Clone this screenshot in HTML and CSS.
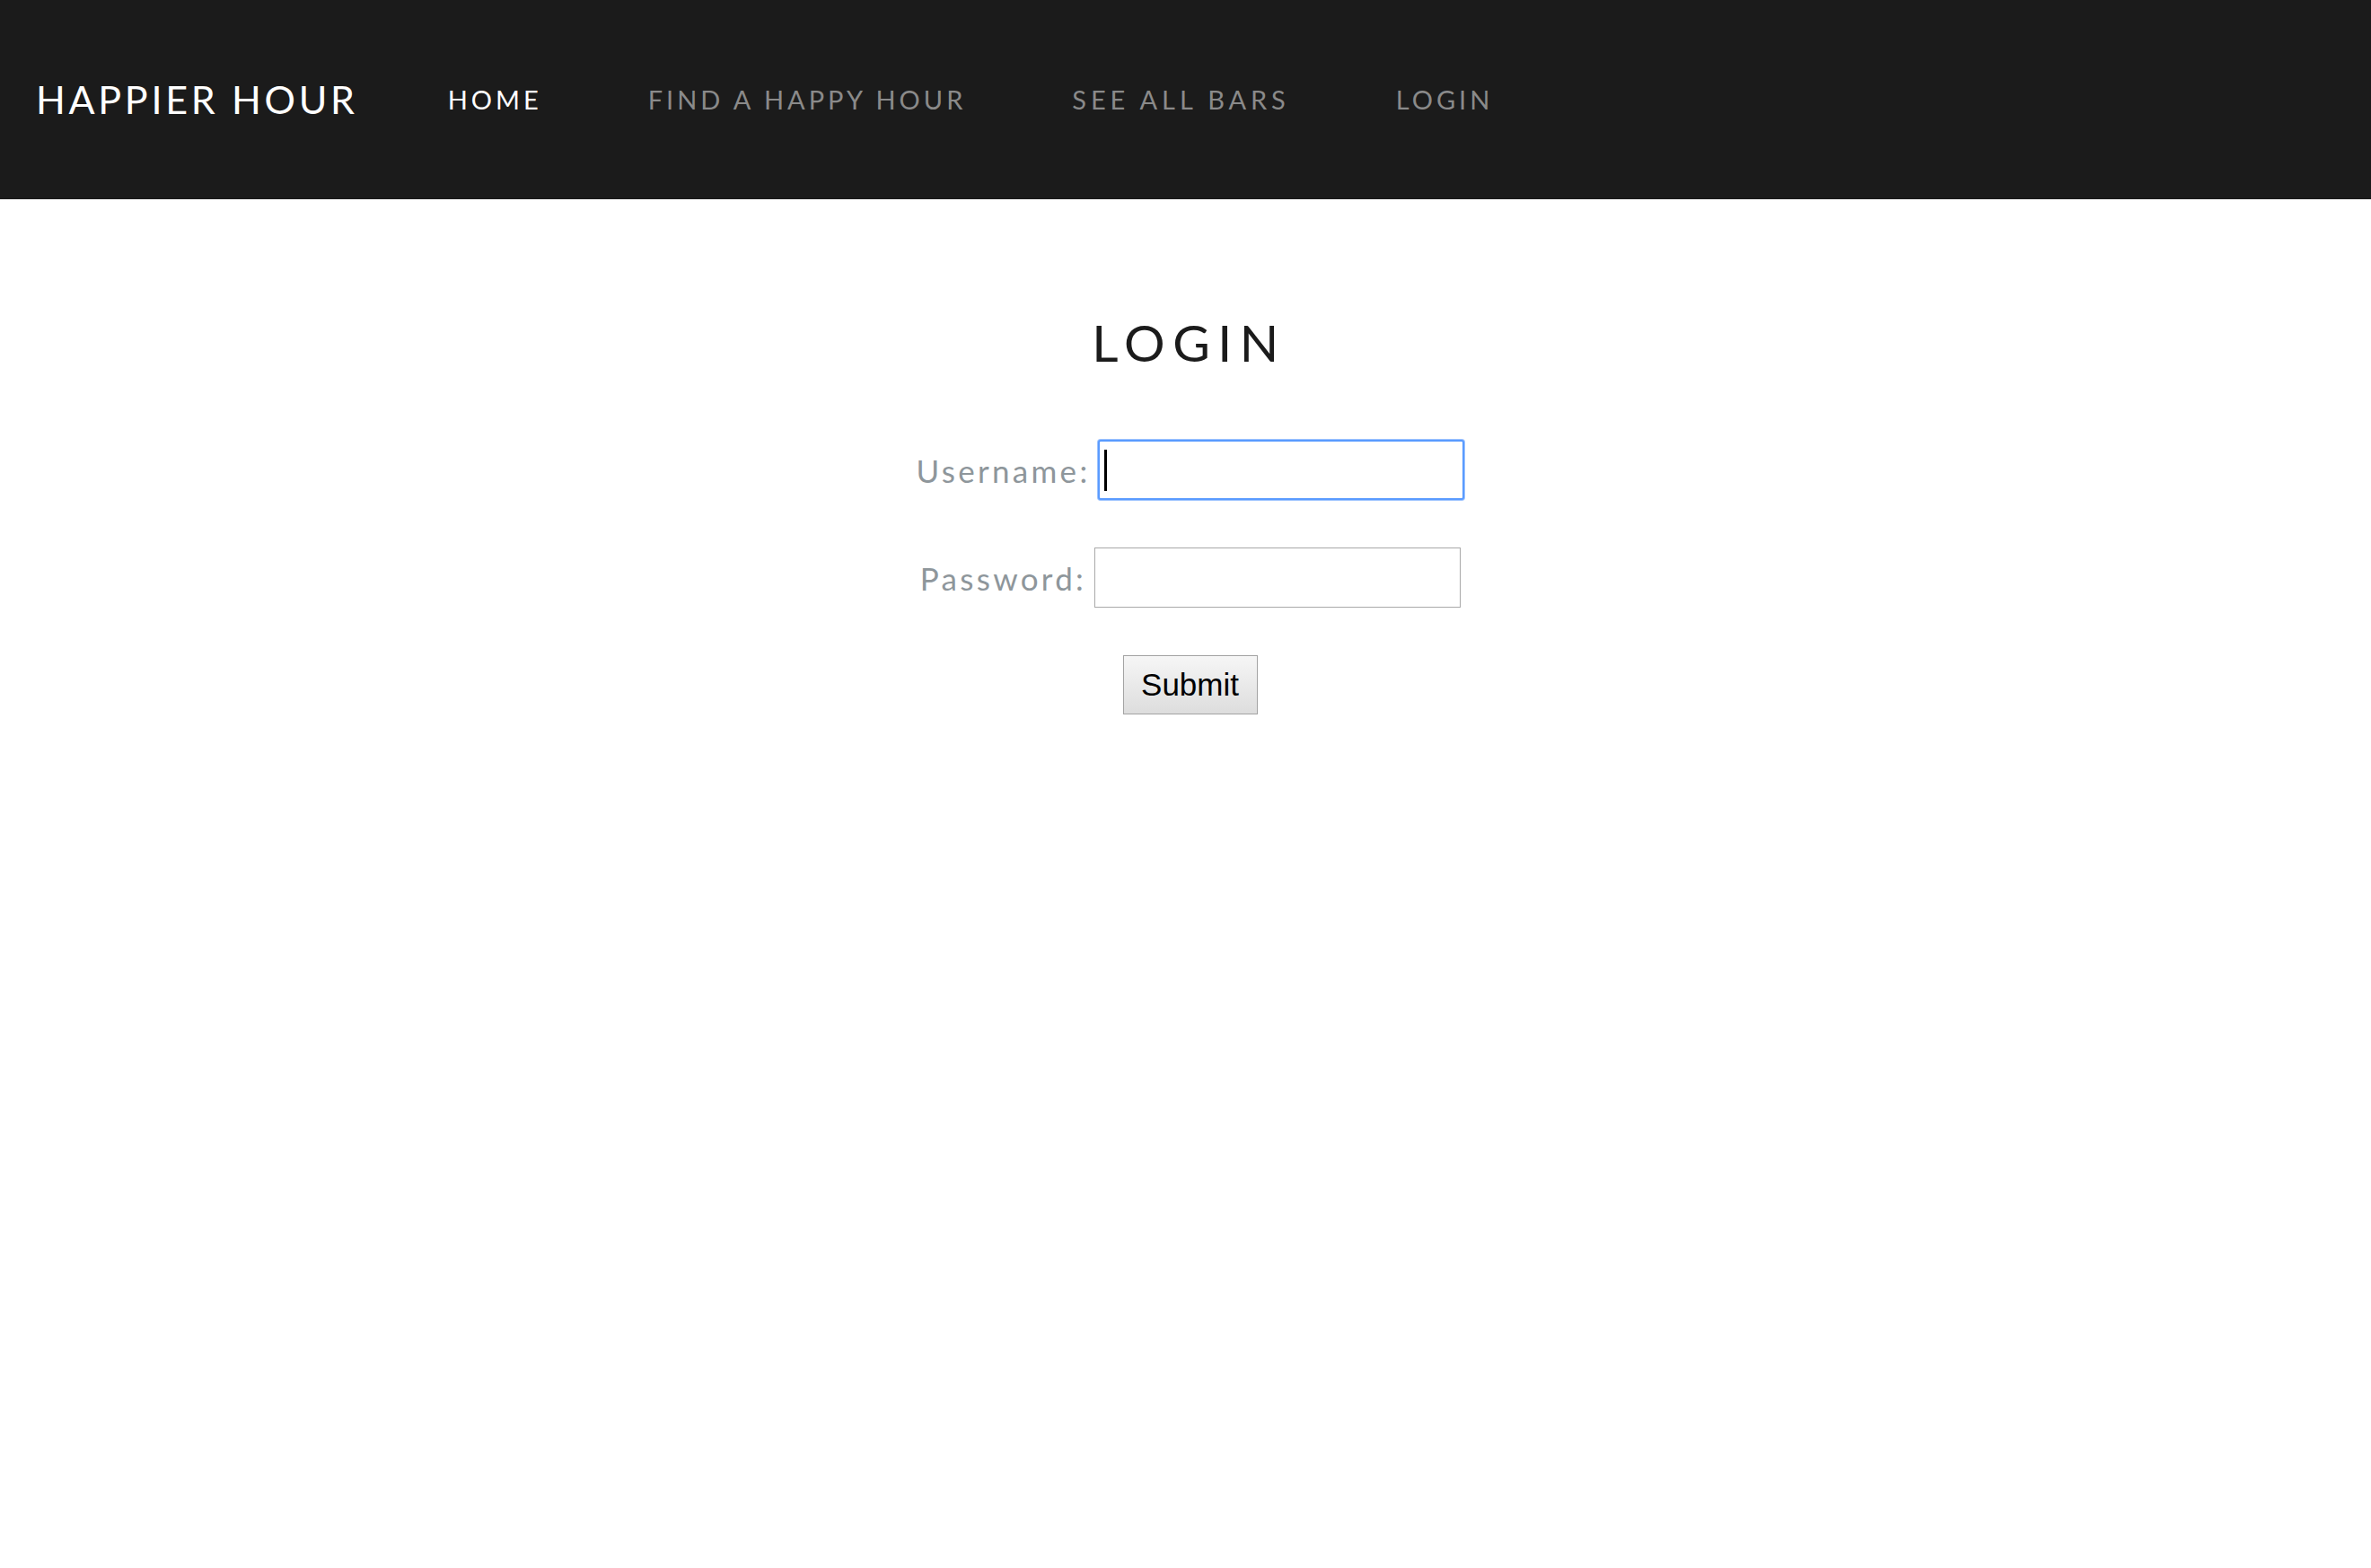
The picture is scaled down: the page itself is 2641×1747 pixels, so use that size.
FILE: index.html
```html
<!DOCTYPE html>
<html lang="en">
<head>
<meta charset="utf-8">
<title>Happier Hour - Login</title>
<link rel="stylesheet" href="styles.css">
</head>
<body>
<header class="topbar">
  <a class="brand" href="#">HAPPIER HOUR</a>
  <nav class="menu">
    <a class="menu-link active" href="#">HOME</a>
    <a class="menu-link" href="#">FIND A HAPPY HOUR</a>
    <a class="menu-link wide" href="#">SEE ALL BARS</a>
    <a class="menu-link" href="#">LOGIN</a>
  </nav>
</header>
<main class="content">
  <h1 class="title">LOGIN</h1>
  <form class="login-form">
    <div class="row">
      <label class="label" for="username">Username:</label>
      <span class="field-wrap"><input class="field focused" id="username" type="text"><span class="caret"></span></span>
    </div>
    <div class="row">
      <label class="label" for="password">Password:</label>
      <input class="field" id="password" type="password">
    </div>
    <div class="row">
      <button class="submit" type="button">Submit</button>
    </div>
  </form>
</main>
</body>
</html>
```
FILE: styles.css
```css
html, body {
  margin: 0;
  padding: 0;
  background: #ffffff;
}
body {
  font-family: Lato, "Open Sans", "Liberation Sans", sans-serif;
}
.topbar {
  display: flex;
  align-items: center;
  height: 222px;
  background: #1b1b1b;
  padding-left: 40px;
  box-sizing: border-box;
}
.brand {
  color: #ffffff;
  text-decoration: none;
  font-size: 43px;
  letter-spacing: 3.7px;
  line-height: 1;
  margin-top: -2px;
}
.menu {
  display: flex;
  gap: 118px;
  margin-left: 100px;
}
.menu-link {
  color: #8a8a8a;
  text-decoration: none;
  font-size: 29px;
  letter-spacing: 4px;
  line-height: 1;
  margin-top: -2px;
}
.menu-link.wide {
  letter-spacing: 4.9px;
}
.menu-link.active {
  color: #ffffff;
}
.content {
  text-align: center;
}
.title {
  margin: 125px 0 0 0;
  font-size: 57px;
  line-height: 1.2;
  font-weight: 400;
  letter-spacing: 8.5px;
  color: #1b1b1b;
  padding-left: 8px;
}
.login-form {
  display: flex;
  flex-direction: column;
  align-items: center;
  gap: 53px;
  margin-top: 75px;
  padding-left: 11px;
}
.row {
  display: flex;
  align-items: center;
  justify-content: center;
  gap: 9px;
}
.label {
  font-size: 35px;
  letter-spacing: 3.3px;
  color: #8e969b;
  line-height: 1.2;
}
.field-wrap {
  position: relative;
  display: inline-flex;
}
.field {
  width: 408px;
  height: 67px;
  box-sizing: border-box;
  border: 1px solid #a9a9a9;
  background: #ffffff;
  margin: 0;
  padding: 0 8px;
  font-size: 30px;
  outline: none;
}
.field.focused {
  border: 2px solid #5a9bff;
  border-radius: 3px;
  box-shadow: 0 0 0 1px #9cc3ff;
}
.caret {
  position: absolute;
  left: 7px;
  top: 11px;
  width: 3px;
  height: 46px;
  background: #000000;
}
.submit {
  width: 150px;
  height: 66px;
  box-sizing: border-box;
  border: 1px solid #a3a3a3;
  border-radius: 0;
  background: linear-gradient(#f6f6f6, #dddddd);
  font-family: "Liberation Sans", Arial, sans-serif;
  font-size: 35px;
  color: #000000;
  padding: 0;
  margin-left: -1px;
}
```
